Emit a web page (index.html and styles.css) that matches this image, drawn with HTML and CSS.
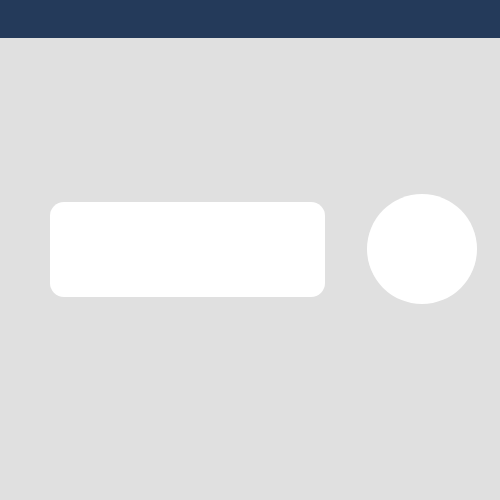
FILE: index.html
```html
<!DOCTYPE html>
<html>
<head>
<meta charset="utf-8">
<link rel="stylesheet" href="styles.css">
</head>
<body>
<header class="topbar"></header>
<main class="stage">
  <div class="row">
    <div class="pill"></div>
    <div class="dot"></div>
  </div>
</main>
</body>
</html>
```
FILE: styles.css
```css
html, body {
  margin: 0;
  padding: 0;
  width: 500px;
  height: 500px;
  background: #e0e0e0;
  font-family: "Liberation Sans", sans-serif;
  overflow: hidden;
}
.topbar {
  height: 38px;
  background: #243a5a;
}
.stage {
  padding: 156px 0 0 50px;
}
.row {
  display: flex;
  align-items: center;
  gap: 42px;
}
.pill {
  width: 275px;
  height: 95px;
  background: #ffffff;
  border-radius: 14px;
}
.dot {
  width: 110px;
  height: 110px;
  background: #ffffff;
  border-radius: 50%;
}
```
